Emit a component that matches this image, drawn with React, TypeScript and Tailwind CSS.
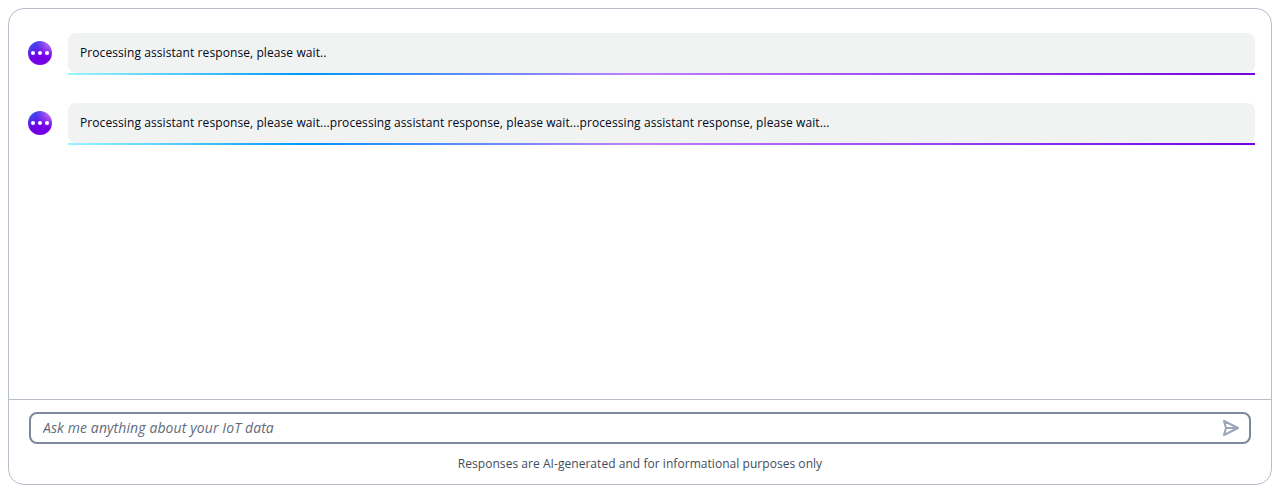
const messages = [
  'Processing assistant response, please wait..',
  'Processing assistant response, please wait...processing assistant response, please wait...processing assistant response, please wait...',
];

function Avatar() {
  return (
    <div className="flex size-6 shrink-0 items-center justify-center rounded-full bg-[radial-gradient(circle_farthest-corner_at_top_left,rgba(0,150,250,1)_-25%,rgba(0,150,250,0)_55%),radial-gradient(circle_farthest-corner_at_top_right,rgba(216,178,255,1)_-10%,rgba(115,0,229,1)_50%)]">
      <svg viewBox="0 0 18 4" className="h-1 w-[18px] fill-white">
        <circle cx="2" cy="2" r="2" />
        <circle cx="9" cy="2" r="2" />
        <circle cx="16" cy="2" r="2" />
      </svg>
    </div>
  );
}

function Message({ text }: { text: string }) {
  return (
    <div className="flex items-start gap-4">
      <div className="pt-2">
        <Avatar />
      </div>
      <div className="min-w-0 flex-1">
        <div className="h-10 rounded-lg bg-[#f1f3f3] px-3 py-2.5 text-[12px] leading-5 tracking-[0.085px] text-[#000716]">
          {text}
        </div>
        <div className="h-0.5 bg-[linear-gradient(90deg,#99f7ff_0%,#0096fa_20%,#bf80ff_48%,#7300e5_100%)]" />
      </div>
    </div>
  );
}

export default function App() {
  return (
    <div className="h-[493px] bg-white p-2 font-['Open_Sans',sans-serif]">
      <div className="flex h-[477px] flex-col rounded-2xl border border-[#b6bec9]">
        <div className="flex flex-1 flex-col gap-7 pt-6 pr-4 pl-[19px]">
          {messages.map((m) => (
            <Message key={m} text={m} />
          ))}
        </div>
        <div className="h-[85px] border-t border-[#b6bec9] px-5 pt-3">
          <div className="flex h-8 items-center rounded-lg border-2 border-[#7d8998] pr-[10px] pl-3">
            <input
              className="min-w-0 flex-1 text-[14px] leading-5 tracking-[0.1px] outline-none placeholder:text-[#5f6b7a] placeholder:italic placeholder:opacity-100"
              placeholder="Ask me anything about your IoT data"
            />
            <svg viewBox="0 0 16 16" className="size-4 shrink-0 fill-none stroke-[#9ba7b6] stroke-2" strokeLinejoin="round">
              <path d="M1 1l14 7L1 15l2-7L1 1ZM3 8h12" />
            </svg>
          </div>
          <p className="mt-2.5 text-center text-[12px] leading-5 tracking-[0.045px] text-[#414d5c]">
            Responses are AI-generated and for informational purposes only
          </p>
        </div>
      </div>
    </div>
  );
}
